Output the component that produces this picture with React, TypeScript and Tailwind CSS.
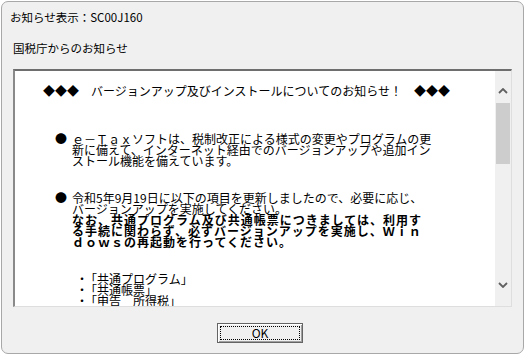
import React from 'react'

const jp = { fontFamily: '"Noto Sans CJK JP", "Noto Sans", sans-serif' }

function Chevron({ up }: { up?: boolean }) {
  return (
    <svg width="10" height="6" viewBox="0 0 10 6" className="block">
      <path
        d={up ? 'M1 5 L5 1 L9 5' : 'M1 1 L5 5 L9 1'}
        fill="none"
        stroke="#606060"
        strokeWidth="1.8"
      />
    </svg>
  )
}

function Item({ label }: { label: string }) {
  return (
    <div className="flex">
      <span className="w-[9px]">・</span>
      <span>{label}</span>
    </div>
  )
}

export default function App() {
  return (
    <div className="w-[526px] h-[355px] bg-white pl-[1px] pt-[1px]" style={jp}>
      <div className="w-[523px] h-[353px] rounded-[7px] border border-[#a8a8a8] bg-[#f0f0f0] flex flex-col text-black">
        <div className="pl-[8px] pt-[7px] leading-[16px] text-[11.5px]">お知らせ表示：SC00J160</div>
        <div className="pl-[11px] mt-[15px] leading-[16px] text-[11.5px]">国税庁からのお知らせ</div>

        <div className="ml-[11px] mt-[13px] w-[499px] h-[238px] flex border-t-2 border-l-2 border-r border-b border-t-[#6e6e6e] border-l-[#8a8a8a] border-r-[#dedede] border-b-[#dedede]">
          <div className="flex-1 bg-white overflow-hidden text-[12px] leading-[11px] whitespace-nowrap">
            <div className="pl-[28px] mt-[14px]">◆◆◆　バージョンアップ及びインストールについてのお知らせ！　◆◆◆</div>

            <div className="flex pl-[40px] mt-[37px]">
              <span className="w-[17px]">●</span>
              <div>
                ｅ－Ｔａｘソフトは、税制改正による様式の変更やプログラムの更<br />
                新に備えて、インターネット経由でのバージョンアップや追加イン<br />
                ストール機能を備えています。
              </div>
            </div>

            <div className="flex pl-[40px] mt-[26px]">
              <span className="w-[17px]">●</span>
              <div>
                令和5年9月19日に以下の項目を更新しましたので、必要に応じ、<br />
                バージョンアップを実施してください。<br />
                <span className="font-bold tracking-[1px]">
                  なお、共通プログラム及び共通帳票につきましては、利用す<br />
                  る手続に関わらず、必ずバージョンアップを実施し、Ｗｉｎ<br />
                  ｄｏｗｓの再起動を行ってください。
                </span>
              </div>
            </div>

            <div className="pl-[61px] mt-[26px]">
              <Item label="「共通プログラム」" />
              <Item label="「共通帳票」" />
              <Item label="「申告　所得税」" />
            </div>
          </div>

          <div className="w-[16px] bg-[#f0f0f0] flex flex-col items-center">
            <div className="h-[32px] pt-[17px]">
              <Chevron up />
            </div>
            <div className="w-[14px] h-[61px] bg-[#cdcdcd]" />
            <div className="flex-1" />
            <div className="h-[32px] pt-[8px]">
              <Chevron />
            </div>
          </div>
        </div>

        <div className="ml-[215px] mt-[16px] w-[86px] h-[20px] border border-[#646464] bg-[#f0f0f0] shadow-[inset_1px_1px_0_#ffffff,inset_-1px_-1px_0_#a0a0a0] p-[2px]">
          <div className="h-full border border-dotted border-black flex items-center justify-center text-[12px] leading-none">
            OK
          </div>
        </div>
      </div>
    </div>
  )
}
